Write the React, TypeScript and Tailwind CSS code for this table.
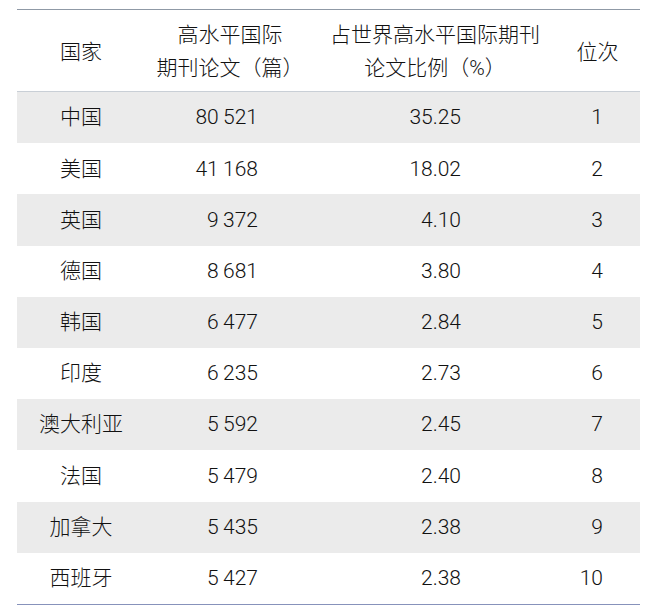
const rows: [string, string, string, string][] = [
  ['中国', '80\u2009521', '35.25', '1'],
  ['美国', '41\u2009168', '18.02', '2'],
  ['英国', '9\u2009372', '4.10', '3'],
  ['德国', '8\u2009681', '3.80', '4'],
  ['韩国', '6\u2009477', '2.84', '5'],
  ['印度', '6\u2009235', '2.73', '6'],
  ['澳大利亚', '5\u2009592', '2.45', '7'],
  ['法国', '5\u2009479', '2.40', '8'],
  ['加拿大', '5\u2009435', '2.38', '9'],
  ['西班牙', '5\u2009427', '2.38', '10'],
];

const cols = 'grid grid-cols-[128px_170px_240px_85px]';

export default function App() {
  return (
    <div
      className="min-h-screen bg-white pt-[9px] pl-[17px] text-[21px] font-light text-[#111111]"
      style={{ fontFamily: 'Roboto, "Noto Sans CJK SC", sans-serif' }}
    >
      <div className="w-[623px] border-t-[1.5px] border-[#8f99a6] border-b-[1.5px] border-b-[#8792bb]">
        <div className={`${cols} h-[82px] items-center border-b border-[#c9cfd6] pt-[3px] leading-[33px]`}>
          <div className="text-center">国家</div>
          <div className="text-center">
            <div>高水平国际</div>
            <div>期刊论文（篇）</div>
          </div>
          <div className="text-center">
            <div>占世界高水平国际期刊</div>
            <div>论文比例（%）</div>
          </div>
          <div className="text-center">位次</div>
        </div>
        {rows.map(([c, n, p, r], i) => (
          <div
            key={c}
            className={`${cols} h-[51.2px] items-center pt-px ${i % 2 === 0 ? 'bg-[#ebebeb]' : 'bg-white'}`}
          >
            <div className="text-center">{c}</div>
            <div className="pr-[57px] text-right">{n}</div>
            <div className="pr-[94px] text-right">{p}</div>
            <div className="pr-[37px] text-right">{r}</div>
          </div>
        ))}
      </div>
    </div>
  );
}
